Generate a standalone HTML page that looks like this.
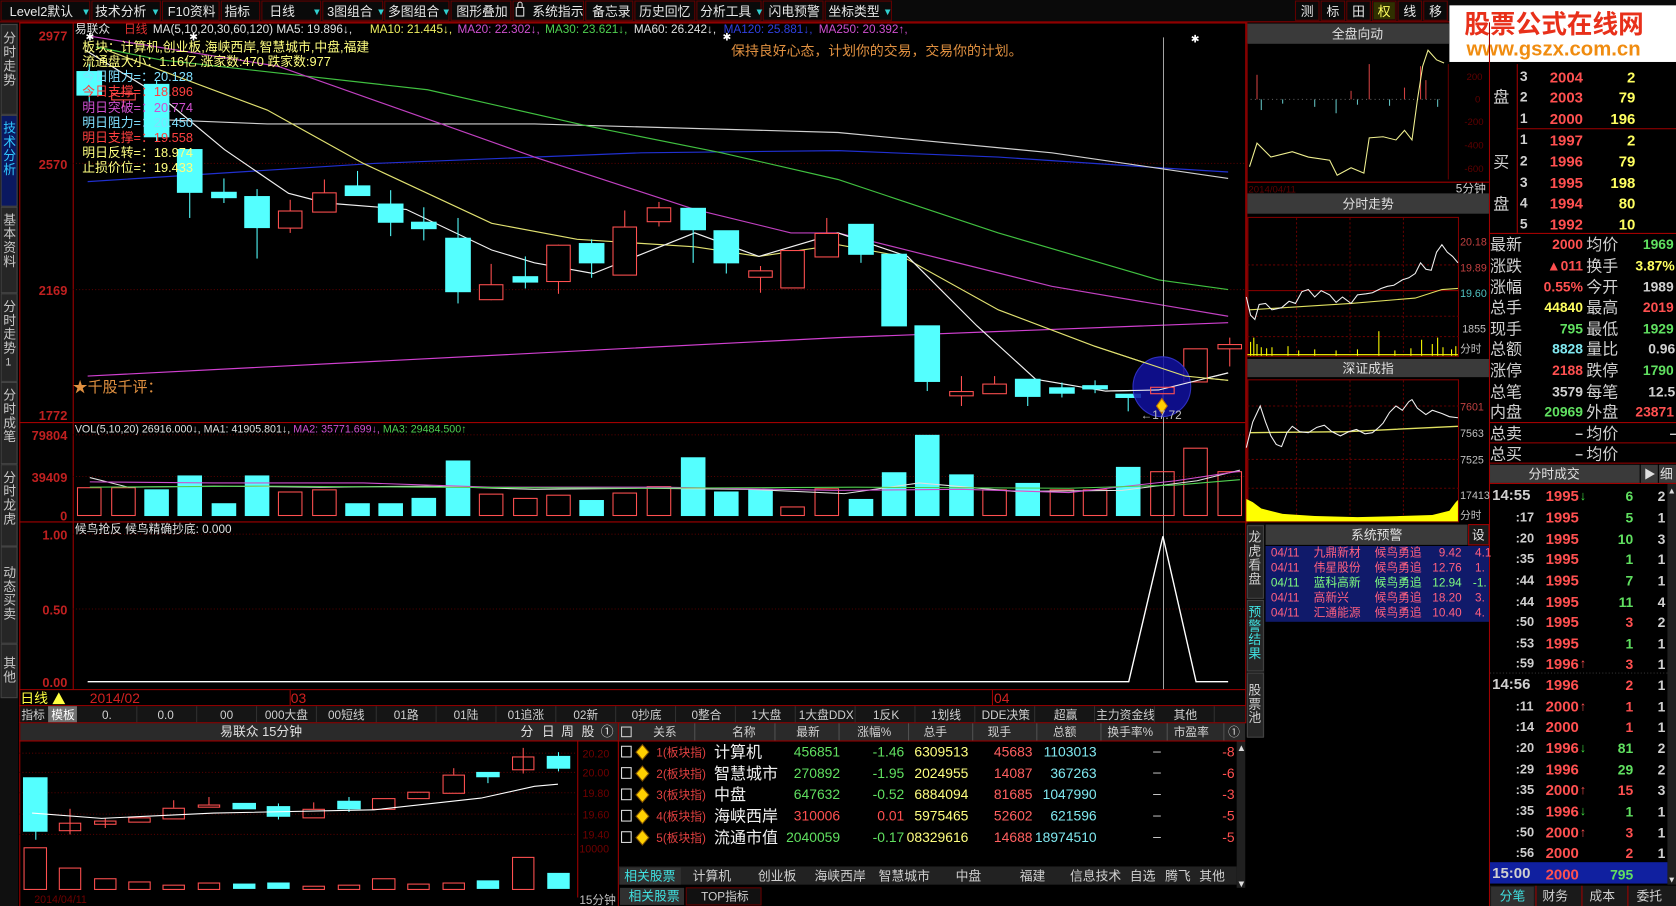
<!DOCTYPE html>
<html><head><meta charset="utf-8"><style>
html,body{margin:0;padding:0;background:#000;width:1676px;height:906px;overflow:hidden}
svg{display:block}
text{font-family:"Liberation Sans","Noto Sans CJK SC",sans-serif}
</style></head><body>
<svg width="1676" height="906" viewBox="0 0 1568 848" preserveAspectRatio="none" xmlns="http://www.w3.org/2000/svg">
<rect width="1568" height="848" fill="#000"/>

<!-- TOOLBAR -->
<g font-size="12" fill="#e8e8e8">
<rect x="0" y="0" width="1568" height="20" fill="#0a0a0a"/>
<line x1="0" y1="20.5" x2="1568" y2="20.5" stroke="#a00000"/>
<g stroke="#600000" fill="none">
<rect x="1" y="1" width="83" height="18"/><rect x="86" y="1" width="64" height="18"/><rect x="152" y="1" width="53" height="18"/>
<rect x="207" y="1" width="36" height="18"/><rect x="245" y="1" width="55" height="18"/><rect x="302" y="1" width="56" height="18"/>
<rect x="360" y="1" width="60" height="18"/><rect x="422" y="1" width="56" height="18"/><rect x="480" y="1" width="66" height="18"/>
<rect x="548" y="1" width="44" height="18"/><rect x="594" y="1" width="56" height="18"/><rect x="652" y="1" width="60" height="18"/>
<rect x="714" y="1" width="56" height="18"/><rect x="772" y="1" width="62" height="18"/>
<rect x="1212" y="1" width="22" height="18"/><rect x="1236" y="1" width="22" height="18"/><rect x="1260" y="1" width="22" height="18"/><rect x="1284" y="1" width="22" height="18"/><rect x="1308" y="1" width="22" height="18"/><rect x="1332" y="1" width="22" height="18"/>
</g>
<text x="9" y="15">Level2默认</text><text x="89" y="15">技术分析</text><text x="157" y="15">F10资料</text>
<text x="210" y="15">指标</text><text x="252" y="15">日线</text><text x="306" y="15">3图组合</text>
<text x="363" y="15">多图组合</text><text x="427" y="15">图形叠加</text><text x="498" y="15">系统指示</text>
<text x="554" y="15">备忘录</text><text x="598" y="15">历史回忆</text><text x="655" y="15">分析工具</text>
<text x="719" y="15">闪电预警</text><text x="775" y="15">坐标类型</text>
<g fill="#30d0d0" font-size="9"><text x="76" y="14">▼</text><text x="141" y="14">▼</text><text x="292" y="14">▼</text><text x="352" y="14">▼</text><text x="413" y="14">▼</text><text x="706" y="14">▼</text><text x="826" y="14">▼</text></g>
<rect x="483" y="7" width="7" height="8" fill="none" stroke="#ddd"/><path d="M484.5 7 V4 a2 2 0 0 1 4 0 V7" fill="none" stroke="#ddd"/>
<text x="1217" y="15">测</text><text x="1241" y="15">标</text><text x="1265" y="15">田</text>
<rect x="1285" y="2" width="20" height="16" fill="#303000"/><text x="1289" y="15" fill="#ffff60">权</text>
<text x="1313" y="15">线</text><text x="1337" y="15">移</text>
</g>

<!-- LOGO -->
<rect x="1356" y="5" width="212" height="53" fill="#fff"/>
<text x="1370" y="31" font-size="24" font-weight="bold" fill="#e8301a">股票公式在线网</text>
<text x="1372" y="52" font-size="19" font-weight="bold" fill="#f08c10">www.gszx.com.cn</text>

<!-- LEFT SIDEBAR -->
<g font-size="12" fill="#c8c8c8">
<rect x="0" y="21" width="17" height="827" fill="#101010"/>
<rect x="1" y="23" width="15" height="84" fill="#262626" stroke="#444"/>
<rect x="1" y="108" width="15" height="85" fill="#0a1860" stroke="#444"/>
<rect x="1" y="194" width="15" height="80" fill="#262626" stroke="#444"/>
<rect x="1" y="275" width="15" height="82" fill="#262626" stroke="#444"/>
<rect x="1" y="358" width="15" height="76" fill="#262626" stroke="#444"/>
<rect x="1" y="435" width="15" height="76" fill="#262626" stroke="#444"/>
<rect x="1" y="512" width="15" height="90" fill="#262626" stroke="#444"/>
<rect x="1" y="603" width="15" height="50" fill="#262626" stroke="#444"/>
<text x="3" y="40">分</text><text x="3" y="53">时</text><text x="3" y="66">走</text><text x="3" y="79">势</text>
<g fill="#30c8ff"><text x="3" y="124">技</text><text x="3" y="137">术</text><text x="3" y="150">分</text><text x="3" y="163">析</text></g>
<text x="3" y="210">基</text><text x="3" y="223">本</text><text x="3" y="236">资</text><text x="3" y="249">料</text>
<text x="3" y="291">分</text><text x="3" y="304">时</text><text x="3" y="317">走</text><text x="3" y="330">势</text><text x="5" y="342" font-size="10">1</text>
<text x="3" y="374">分</text><text x="3" y="387">时</text><text x="3" y="400">成</text><text x="3" y="413">笔</text>
<text x="3" y="451">分</text><text x="3" y="464">时</text><text x="3" y="477">龙</text><text x="3" y="490">虎</text>
<text x="3" y="540">动</text><text x="3" y="553">态</text><text x="3" y="566">买</text><text x="3" y="579">卖</text>
<text x="3" y="625">其</text><text x="3" y="638">他</text>
</g>

<!-- MAIN CHART FRAME -->
<g stroke="#a00000" fill="none">
<rect x="18.5" y="21.5" width="1147" height="655"/>
<line x1="68.5" y1="21" x2="68.5" y2="645"/>
<line x1="18" y1="395.5" x2="1165" y2="395.5"/>
<line x1="18" y1="488.5" x2="1165" y2="488.5"/>
<line x1="18" y1="645.5" x2="1165" y2="645.5"/>
<line x1="18" y1="660.5" x2="1165" y2="660.5"/>
<line x1="18" y1="676.5" x2="1165" y2="676.5"/>
</g>
<g stroke="#500000" stroke-dasharray="1 2">
<line x1="68" y1="153" x2="1165" y2="153"/><line x1="68" y1="271" x2="1165" y2="271"/>
<line x1="68" y1="407" x2="1165" y2="407"/><line x1="68" y1="446" x2="1165" y2="446"/>
<line x1="68" y1="500" x2="1165" y2="500"/><line x1="68" y1="570" x2="1165" y2="570"/>
</g>
<g font-size="12" fill="#c02020" font-weight="bold" text-anchor="end">
<text x="63" y="38">2977</text><text x="63" y="158">2570</text><text x="63" y="276">2169</text><text x="63" y="393">1772</text>
<text x="63" y="412">79804</text><text x="63" y="451">39409</text><text x="63" y="487">0</text>
<text x="63" y="505">1.00</text><text x="63" y="575">0.50</text><text x="63" y="643">0.00</text>
</g>

<!-- MA lines -->
<g fill="none" stroke-width="1.1">
<polyline stroke="#d040d0" points="82,352 784,316 1149,302"/>
<polyline stroke="#2030d0" points="82,170 350,153 600,143 784,141 934,147 1084,157 1149,161"/>
<polyline stroke="#d0d0d0" points="150,112 250,116 500,116 784,124 984,143 1149,167"/>
<polyline stroke="#40c040" points="90,44 150,56 400,84 550,118 675,143 784,168 934,218 1084,262 1149,271"/>
<polyline stroke="#c040c0" points="85,34 260,62 410,115 500,147 650,196 740,218 784,218 884,243 984,268 1149,296"/>
<polyline stroke="#e0e070" points="100,47 250,103 340,153 460,209 540,224 650,231 710,240 784,229 844,240 934,290 1024,324 1109,352 1149,356"/>
<polyline stroke="#f0f0f0" points="80,47 150,90 210,140 270,181 305,190 380,196 460,234 500,246 555,256 650,218 710,240 784,218 849,240 914,305 969,355 1034,366 1084,365 1149,349"/>
</g>

<!-- Candles -->
<g stroke-width="1">
<g stroke="#54ffff" fill="#54ffff">
<line x1="83.5" y1="60" x2="83.5" y2="95"/><rect x="72" y="67" width="23" height="22"/>
<line x1="146.5" y1="75" x2="146.5" y2="132"/><rect x="135" y="79" width="23" height="49"/>
<line x1="177.5" y1="140" x2="177.5" y2="204"/><rect x="166" y="140" width="23" height="40"/>
<line x1="209.5" y1="167" x2="209.5" y2="190"/><rect x="198" y="180" width="23" height="5"/>
<line x1="240.5" y1="177" x2="240.5" y2="242"/><rect x="229" y="184" width="23" height="29"/>
<line x1="334.5" y1="160" x2="334.5" y2="183"/><rect x="323" y="174" width="23" height="9"/>
<line x1="365.5" y1="178" x2="365.5" y2="221"/><rect x="354" y="191" width="23" height="17"/>
<line x1="396.5" y1="194" x2="396.5" y2="225"/><rect x="385" y="208" width="23" height="6"/>
<line x1="428.5" y1="204" x2="428.5" y2="284"/><rect x="417" y="223" width="23" height="50"/>
<line x1="491.5" y1="240" x2="491.5" y2="270"/><rect x="480" y="259" width="23" height="5"/>
<line x1="553.5" y1="224" x2="553.5" y2="260"/><rect x="542" y="228" width="23" height="18"/>
<line x1="648.5" y1="195" x2="648.5" y2="246"/><rect x="637" y="195" width="23" height="20"/>
<line x1="679.5" y1="216" x2="679.5" y2="256"/><rect x="668" y="216" width="23" height="30"/>
<line x1="805.5" y1="210" x2="805.5" y2="246"/><rect x="794" y="210" width="23" height="28"/>
<rect x="825" y="238" width="23" height="67"/>
<line x1="867.5" y1="305" x2="867.5" y2="366"/><rect x="856" y="305" width="23" height="52"/>
<line x1="961.5" y1="355" x2="961.5" y2="380"/><rect x="950" y="355" width="23" height="16"/>
<line x1="993.5" y1="358" x2="993.5" y2="372"/><rect x="982" y="363" width="23" height="5"/>
<line x1="1024.5" y1="356" x2="1024.5" y2="368"/><rect x="1013" y="361" width="23" height="3"/>
<line x1="1055.5" y1="372" x2="1055.5" y2="385"/><rect x="1044" y="369" width="23" height="3"/>
</g>
<g stroke="#ff5050" fill="#000">
<line x1="115.5" y1="80" x2="115.5" y2="100"/><rect x="104.5" y="87.5" width="22" height="6"/>
<line x1="271.5" y1="187" x2="271.5" y2="218"/><rect x="260.5" y="197.5" width="22" height="16"/>
<line x1="303.5" y1="168" x2="303.5" y2="198"/><rect x="292.5" y="180.5" width="22" height="18"/>
<line x1="459.5" y1="247" x2="459.5" y2="281"/><rect x="448.5" y="266.5" width="22" height="14"/>
<line x1="522.5" y1="229" x2="522.5" y2="275"/><rect x="511.5" y="229.5" width="22" height="34"/>
<line x1="584.5" y1="197" x2="584.5" y2="257"/><rect x="573.5" y="212.5" width="22" height="45"/>
<line x1="616.5" y1="189" x2="616.5" y2="212"/><rect x="605.5" y="194.5" width="22" height="13"/>
<line x1="711.5" y1="249" x2="711.5" y2="274"/><rect x="700.5" y="253.5" width="22" height="6"/>
<rect x="730.5" y="234.5" width="22" height="35"/>
<line x1="773.5" y1="204" x2="773.5" y2="240"/><rect x="762.5" y="218.5" width="22" height="22"/>
<line x1="899.5" y1="352" x2="899.5" y2="380"/><rect x="888.5" y="366.5" width="22" height="4"/>
<line x1="930.5" y1="352" x2="930.5" y2="368"/><rect x="919.5" y="359.5" width="22" height="9"/>
<line x1="1087.5" y1="362" x2="1087.5" y2="376"/><rect x="1076.5" y="362.5" width="22" height="6"/>
<rect x="1107.5" y="326.5" width="22" height="31"/>
<line x1="1150.5" y1="316" x2="1150.5" y2="343"/><rect x="1139.5" y="322.5" width="22" height="4"/>
</g>
</g>
<line x1="1088.5" y1="35" x2="1088.5" y2="645" stroke="#c0c0c0" stroke-width="0.8"/>
<ellipse cx="1087" cy="362" rx="27" ry="28" fill="#1010a0" fill-opacity="0.85" stroke="#3030c0"/>
<polyline fill="none" stroke="#f0f0f0" points="1034,366 1084,365 1149,349"/>
<polyline fill="none" stroke="#e0e070" points="1024,324 1109,352 1149,356"/>
<rect x="1076.5" y="362.5" width="22" height="6" fill="none" stroke="#ff5050"/>
<path d="M1087 373 l5 7 l-5 7 l-5 -7z" fill="#ffd000" stroke="#c07000"/>
<text x="1067" y="392" font-size="11" fill="#c0c0c0">←17.72</text>
<g fill="#fff" font-size="10"><text x="80" y="38">✱</text><text x="177" y="38">✱</text><text x="676" y="38">✱</text><text x="1114" y="40">✱</text></g>

<g font-size="11">
<text x="70" y="31" fill="#e0e0e0">易联众</text>
<text x="116" y="31" fill="#e03030">日线</text>
<text x="143" y="31" fill="#e0e0e0">MA(5,10,20,30,60,120) MA5: 19.896↓,</text>
<text x="346" y="31" fill="#f0f060">MA10: 21.445↓,</text>
<text x="428" y="31" fill="#d050d0">MA20: 22.302↓,</text>
<text x="510" y="31" fill="#50d050">MA30: 23.621↓,</text>
<text x="593" y="31" fill="#e0e0e0">MA60: 26.242↓,</text>
<text x="677" y="31" fill="#3040e0">MA120: 25.881↓,</text>
<text x="766" y="31" fill="#d050d0">MA250: 20.392↑,</text>
</g>
<g font-size="12">
<text x="77" y="48" fill="#ffff80">板块：计算机,创业板,海峡西岸,智慧城市,中盘,福建</text>
<text x="77" y="62" fill="#ffff80">流通盘大小：1.16亿  涨家数:470   跌家数:977</text>
<text x="77" y="76" fill="#80e0ff">今日阻力=：20.128</text>
<text x="77" y="90" fill="#ff4040">今日支撑=：18.896</text>
<text x="77" y="105" fill="#d050d0">明日突破=：20.774</text>
<text x="77" y="119" fill="#80e0ff">明日阻力=：20.450</text>
<text x="77" y="133" fill="#ff4040">明日支撑=：19.558</text>
<text x="77" y="147" fill="#ffff80">明日反转=：18.974</text>
<text x="77" y="161" fill="#ffff80">止损价位=：19.433</text>
</g>
<text x="684" y="52" font-size="13" fill="#e09040">保持良好心态，计划你的交易，交易你的计划。</text>
<text x="68" y="367" font-size="14" fill="#e09040">★千股千评：</text>

<!-- VOLUME -->
<text x="70" y="405" font-size="10" fill="#e0e0e0">VOL(5,10,20)  26916.000↓, <tspan fill="#e0e0e0">MA1: 41905.801↓,</tspan> <tspan fill="#d050d0">MA2: 35771.699↓,</tspan> <tspan fill="#50d050">MA3: 29484.500↑</tspan></text>
<g fill="#54ffff">
<rect x="135" y="458" width="23" height="25"/><rect x="166" y="445" width="23" height="38"/><rect x="198" y="471" width="23" height="12"/>
<rect x="229" y="445" width="23" height="38"/><rect x="323" y="471" width="23" height="12"/><rect x="354" y="471" width="23" height="12"/>
<rect x="385" y="466" width="23" height="17"/><rect x="417" y="431" width="23" height="52"/><rect x="542" y="468" width="23" height="15"/>
<rect x="637" y="428" width="23" height="55"/><rect x="668" y="460" width="23" height="23"/><rect x="700" y="458" width="23" height="25"/>
<rect x="794" y="467" width="23" height="16"/><rect x="825" y="442" width="23" height="41"/><rect x="856" y="407" width="23" height="76"/>
<rect x="888" y="444" width="23" height="39"/><rect x="950" y="452" width="23" height="31"/><rect x="1044" y="437" width="23" height="46"/>
</g>
<g fill="none" stroke="#ff5050">
<rect x="72.5" y="456.5" width="22" height="26"/><rect x="104.5" y="456.5" width="22" height="26"/><rect x="260.5" y="460.5" width="22" height="22"/>
<rect x="292.5" y="458.5" width="22" height="24"/><rect x="448.5" y="462.5" width="22" height="20"/><rect x="480.5" y="466.5" width="22" height="16"/>
<rect x="511.5" y="463.5" width="22" height="19"/><rect x="573.5" y="461.5" width="22" height="21"/><rect x="605.5" y="455.5" width="22" height="27"/>
<rect x="730.5" y="474.5" width="22" height="8"/><rect x="762.5" y="457.5" width="22" height="25"/><rect x="919.5" y="458.5" width="22" height="24"/>
<rect x="982.5" y="458.5" width="22" height="24"/><rect x="1013.5" y="458.5" width="22" height="24"/><rect x="1076.5" y="441.5" width="22" height="41"/>
<rect x="1107.5" y="419.5" width="22" height="63"/><rect x="1139.5" y="441.5" width="22" height="41"/>
</g>
<g fill="none" stroke-width="1">
<polyline stroke="#e0e0e0" points="84,447 120,456 200,455 300,456 400,455 500,458 600,457 700,458 790,462 860,452 950,460 1050,459 1120,450 1160,440"/>
<polyline stroke="#d050d0" points="84,451 200,452 340,452 460,456 620,456 780,459 900,458 1000,461 1100,450 1160,441"/>
<polyline stroke="#50d050" points="84,456 250,455 400,456 600,457 800,456 1000,457 1100,454 1160,449"/>
</g>

<!-- INDICATOR -->
<text x="70" y="499" font-size="11" fill="#e0e0e0">候鸟抢反  候鸟精确抄底: 0.000</text>
<polyline fill="none" stroke="#fff" stroke-width="1.3" points="82,638 1056,638 1088,502 1119,638 1149,638"/>

<!-- DATE AXIS -->
<text x="19" y="658" font-size="13" fill="#ffff40">日线</text><path d="M49 659 l6 -11 l6 11z" fill="#ffff40"/>
<text x="84" y="658" font-size="13" fill="#d02020">2014/02</text>
<text x="272" y="658" font-size="13" fill="#d02020">03</text>
<text x="930" y="658" font-size="13" fill="#d02020">04</text>
<line x1="271.5" y1="646" x2="271.5" y2="660" stroke="#a00000"/><line x1="928.5" y1="646" x2="928.5" y2="660" stroke="#a00000"/>

<!-- TAB ROW -->
<rect x="19" y="661" width="1146" height="15" fill="#151515"/>
<rect x="45" y="661" width="27" height="15" fill="#707070"/>
<g font-size="11" fill="#d0d0d0" text-anchor="middle">
<text x="31" y="673">指标</text><text x="59" y="673" fill="#fff">模板</text>
<text x="100" y="673">0.</text><text x="155" y="673">0.0</text><text x="212" y="673">00</text><text x="268" y="673">000大盘</text>
<text x="324" y="673">00短线</text><text x="380" y="673">01路</text><text x="436" y="673">01陆</text><text x="492" y="673">01追涨</text>
<text x="548" y="673">02新</text><text x="605" y="673">0抄底</text><text x="661" y="673">0整合</text><text x="717" y="673">1大盘</text>
<text x="773" y="673">1大盘DDX</text><text x="829" y="673">1反K</text><text x="885" y="673">1划线</text><text x="941" y="673">DDE决策</text>
<text x="997" y="673">超赢</text><text x="1053" y="673">主力资金线</text><text x="1109" y="673">其他</text>
</g>
<g stroke="#303030"><line x1="128" y1="661" x2="128" y2="676"/><line x1="184" y1="661" x2="184" y2="676"/><line x1="240" y1="661" x2="240" y2="676"/><line x1="296" y1="661" x2="296" y2="676"/><line x1="352" y1="661" x2="352" y2="676"/><line x1="408" y1="661" x2="408" y2="676"/><line x1="464" y1="661" x2="464" y2="676"/><line x1="520" y1="661" x2="520" y2="676"/><line x1="576" y1="661" x2="576" y2="676"/><line x1="632" y1="661" x2="632" y2="676"/><line x1="688" y1="661" x2="688" y2="676"/><line x1="744" y1="661" x2="744" y2="676"/><line x1="800" y1="661" x2="800" y2="676"/><line x1="856" y1="661" x2="856" y2="676"/><line x1="912" y1="661" x2="912" y2="676"/><line x1="968" y1="661" x2="968" y2="676"/><line x1="1024" y1="661" x2="1024" y2="676"/><line x1="1080" y1="661" x2="1080" y2="676"/><line x1="1136" y1="661" x2="1136" y2="676"/></g>

<!-- BOTTOM LEFT 15 MIN -->
<rect x="19" y="677" width="559" height="16" fill="#2a2a2a"/>
<text x="206" y="689" font-size="12" fill="#e0e0e0">易联众   15分钟</text>
<g font-size="12" fill="#e0e0e0"><text x="487" y="689">分</text><text x="507" y="689">日</text><text x="525" y="689">周</text><text x="544" y="689">股</text><text x="562" y="689">①</text></g>
<g stroke="#a00000" fill="none"><line x1="18" y1="693.5" x2="1165" y2="693.5"/><line x1="578.5" y1="677" x2="578.5" y2="848"/><line x1="540.5" y1="693" x2="540.5" y2="840"/><line x1="18.5" y1="677" x2="18.5" y2="848"/></g>
<g stroke="#500000" stroke-dasharray="1 2"><line x1="18" y1="705" x2="540" y2="705"/><line x1="18" y1="723" x2="540" y2="723"/><line x1="18" y1="742" x2="540" y2="742"/><line x1="18" y1="762" x2="540" y2="762"/><line x1="18" y1="781" x2="540" y2="781"/></g>
<g font-size="10" fill="#700000"><text x="545" y="709">20.20</text><text x="545" y="727">20.00</text><text x="545" y="746">19.80</text><text x="545" y="766">19.60</text><text x="545" y="785">19.40</text><text x="542" y="798">10000</text><text x="32" y="845">2014/04/11</text></g>
<text x="542" y="846" font-size="11" fill="#c0c0c0">15分钟</text>
<g fill="#54ffff" stroke="#54ffff">
<line x1="33.5" y1="728" x2="33.5" y2="786"/><rect x="22" y="728" width="22" height="50"/>
<rect x="218" y="752" width="21" height="5"/><line x1="260.5" y1="752" x2="260.5" y2="767"/><rect x="250" y="755" width="21" height="9"/>
<line x1="326.5" y1="746" x2="326.5" y2="760"/><rect x="316" y="750" width="21" height="7"/><line x1="456.5" y1="723" x2="456.5" y2="733"/><rect x="446" y="723" width="21" height="4"/>
<line x1="522.5" y1="704" x2="522.5" y2="722"/><rect x="512" y="708" width="21" height="11"/>
</g>
<g fill="none" stroke="#ff5050">
<line x1="65.5" y1="757" x2="65.5" y2="781"/><rect x="55.5" y="770.5" width="20" height="7"/>
<line x1="98.5" y1="766" x2="98.5" y2="775"/><rect x="88.5" y="768.5" width="20" height="3"/>
<rect x="120.5" y="765.5" width="20" height="4"/>
<line x1="162.5" y1="749" x2="162.5" y2="756"/><rect x="152.5" y="756.5" width="20" height="10"/>
<line x1="195.5" y1="746" x2="195.5" y2="753"/><rect x="185.5" y="753.5" width="20" height="2"/>
<rect x="283.5" y="757.5" width="20" height="8"/><line x1="293.5" y1="751" x2="293.5" y2="757"/>
<rect x="348.5" y="747.5" width="21" height="10"/><rect x="381.5" y="741.5" width="20" height="6"/>
<line x1="424.5" y1="719" x2="424.5" y2="725"/><rect x="414.5" y="725.5" width="20" height="17"/>
<line x1="489.5" y1="700" x2="489.5" y2="724"/><rect x="479.5" y="708.5" width="20" height="12"/>
</g>
<polyline fill="none" stroke="#fff" points="30,761 95,766 200,761 350,758 450,747 500,736 522,734"/>
<g fill="#54ffff"><rect x="218" y="827" width="21" height="5"/><rect x="250" y="826" width="21" height="6"/><rect x="446" y="824" width="21" height="8"/><rect x="512" y="817" width="21" height="15"/></g>
<g fill="none" stroke="#ff5050"><rect x="22.5" y="793.5" width="21" height="39"/><rect x="55.5" y="812.5" width="20" height="20"/><rect x="88.5" y="822.5" width="20" height="10"/><rect x="120.5" y="825.5" width="20" height="7"/><rect x="152.5" y="828.5" width="20" height="4"/><rect x="185.5" y="826.5" width="20" height="6"/><rect x="283.5" y="829.5" width="20" height="3"/><rect x="316.5" y="828.5" width="20" height="4"/><rect x="348.5" y="822.5" width="21" height="10"/><rect x="381.5" y="827.5" width="20" height="5"/><rect x="414.5" y="826.5" width="20" height="6"/><rect x="479.5" y="802.5" width="20" height="30"/></g>

<!-- RELATED STOCKS TABLE -->
<rect x="579" y="677" width="586" height="16" fill="#2a2a2a"/>
<g font-size="11" fill="#d0d0d0">
<rect x="581.5" y="680.5" width="9" height="9" fill="none" stroke="#ccc"/>
<text x="611" y="689">关系</text><text x="685" y="689">名称</text><text x="745" y="689">最新</text><text x="802" y="689">涨幅%</text>
<text x="864" y="689">总手</text><text x="924" y="689">现手</text><text x="985" y="689">总额</text><text x="1036" y="689">换手率%</text>
<text x="1098" y="689">市盈率</text><text x="1149" y="689">①</text>
</g>
<g stroke="#505050"><line x1="650" y1="677" x2="650" y2="693"/><line x1="725" y1="677" x2="725" y2="693"/><line x1="785" y1="677" x2="785" y2="693"/><line x1="850" y1="677" x2="850" y2="693"/><line x1="910" y1="677" x2="910" y2="693"/><line x1="970" y1="677" x2="970" y2="693"/><line x1="1030" y1="677" x2="1030" y2="693"/><line x1="1092" y1="677" x2="1092" y2="693"/><line x1="1145" y1="677" x2="1145" y2="693"/></g>
<g>
<g fill="none" stroke="#ddd"><rect x="581.5" y="698.5" width="9" height="10"/><rect x="581.5" y="718.5" width="9" height="10"/><rect x="581.5" y="738.5" width="9" height="10"/><rect x="581.5" y="758.5" width="9" height="10"/><rect x="581.5" y="778.5" width="9" height="10"/></g>
<g fill="#ffd000" stroke="#805000"><path d="M601 697 l6 7 l-6 7 l-6 -7z"/><path d="M601 717 l6 7 l-6 7 l-6 -7z"/><path d="M601 737 l6 7 l-6 7 l-6 -7z"/><path d="M601 757 l6 7 l-6 7 l-6 -7z"/><path d="M601 777 l6 7 l-6 7 l-6 -7z"/></g>
<g font-size="11" fill="#e04040"><text x="614" y="708">1(板块指)</text><text x="614" y="728">2(板块指)</text><text x="614" y="748">3(板块指)</text><text x="614" y="768">4(板块指)</text><text x="614" y="788">5(板块指)</text></g>
<g font-size="15" fill="#f0f0f0"><text x="668" y="709">计算机</text><text x="668" y="729">智慧城市</text><text x="668" y="749">中盘</text><text x="668" y="769">海峡西岸</text><text x="668" y="789">流通市值</text></g>
<g font-size="13" text-anchor="end">
<g fill="#60e060"><text x="786" y="708">456851</text><text x="786" y="728">270892</text><text x="786" y="748">647632</text><text x="786" y="788">2040059</text></g>
<text x="786" y="768" fill="#ff5050">310006</text>
<g fill="#60e060"><text x="846" y="708">-1.46</text><text x="846" y="728">-1.95</text><text x="846" y="748">-0.52</text><text x="846" y="788">-0.17</text></g>
<text x="846" y="768" fill="#ff5050">0.01</text>
<g fill="#ffff80"><text x="906" y="708">6309513</text><text x="906" y="728">2024955</text><text x="906" y="748">6884094</text><text x="906" y="768">5975465</text><text x="906" y="788">08329616</text></g>
<g fill="#ff6060"><text x="966" y="708">45683</text><text x="966" y="728">14087</text><text x="966" y="748">81685</text><text x="966" y="768">52602</text><text x="966" y="788">14688</text></g>
<g fill="#80e8f0"><text x="1026" y="708">1103013</text><text x="1026" y="728">367263</text><text x="1026" y="748">1047990</text><text x="1026" y="768">621596</text><text x="1026" y="788">18974510</text></g>
<g fill="#d0d0d0"><text x="1086" y="707">–</text><text x="1086" y="727">–</text><text x="1086" y="747">–</text><text x="1086" y="767">–</text><text x="1086" y="787">–</text></g>
<g fill="#ff5050"><text x="1155" y="708">-8</text><text x="1155" y="728">-6</text><text x="1155" y="748">-3</text><text x="1155" y="768">-5</text><text x="1155" y="788">-5</text></g>
</g>
</g>
<rect x="1157" y="694" width="8" height="137" fill="#202020"/>
<text x="1157" y="703" font-size="9" fill="#ddd">▲</text><text x="1157" y="830" font-size="9" fill="#ddd">▼</text>
<rect x="579" y="811" width="578" height="17" fill="#222"/>
<rect x="580" y="812" width="57" height="16" fill="#303030"/>
<g font-size="12" fill="#d0d0d0" text-anchor="middle">
<text x="608" y="824" fill="#40e0e0">相关股票</text><text x="666" y="824">计算机</text><text x="727" y="824">创业板</text><text x="786" y="824">海峡西岸</text><text x="846" y="824">智慧城市</text><text x="906" y="824">中盘</text><text x="966" y="824">福建</text><text x="1025" y="824">信息技术</text><text x="1069" y="824">自选</text><text x="1102" y="824">腾飞</text><text x="1134" y="824">其他</text>
</g>
<rect x="580" y="831" width="60" height="16" fill="#303030"/><rect x="642" y="831" width="70" height="16" fill="#111" stroke="#600"/>
<text x="588" y="843" font-size="12" fill="#40e0e0">相关股票</text><text x="656" y="843" font-size="11" fill="#d0d0d0">TOP指标</text>

<!-- RIGHT MIDDLE PANELS -->
<g stroke="#a00000" fill="none"><line x1="1166.5" y1="21" x2="1166.5" y2="490"/><line x1="1393.5" y1="21" x2="1393.5" y2="848"/></g>
<rect x="1167" y="22" width="189" height="19" fill="#3a3a3a"/>
<text x="1246" y="36" font-size="12" fill="#e0e0e0">全盘向动</text>
<g stroke="#600000"><line x1="1167" y1="41" x2="1167" y2="170"/><line x1="1355" y1="60" x2="1355" y2="168"/></g>
<g font-size="9" fill="#600000"><text x="1372" y="75">200</text><text x="1380" y="96">0</text><text x="1370" y="117">-200</text><text x="1370" y="139">-400</text><text x="1370" y="161">-600</text><text x="1168" y="180">2014/04/11</text></g>
<text x="1362" y="180" font-size="11" fill="#d0d0d0">5分钟</text>
<line x1="1167" y1="170.5" x2="1393" y2="170.5" stroke="#a00000"/>
<g stroke="#d04040"><line x1="1176" y1="70" x2="1176" y2="93"/><line x1="1281" y1="60" x2="1281" y2="93"/><line x1="1314" y1="82" x2="1314" y2="93"/><line x1="1329" y1="62" x2="1329" y2="93"/><line x1="1334" y1="75" x2="1334" y2="93"/><line x1="1264" y1="85" x2="1264" y2="93"/></g>
<g stroke="#60c0c0"><line x1="1180" y1="93" x2="1180" y2="103"/><line x1="1200" y1="93" x2="1200" y2="97"/><line x1="1230" y1="93" x2="1230" y2="100"/><line x1="1250" y1="93" x2="1250" y2="106"/><line x1="1270" y1="93" x2="1270" y2="98"/><line x1="1300" y1="93" x2="1300" y2="99"/><line x1="1345" y1="93" x2="1345" y2="100"/></g>
<line x1="1170" y1="93" x2="1350" y2="93" stroke="#606060" stroke-dasharray="1 3"/>
<polyline fill="none" stroke="#f0f090" points="1169,156 1176,134 1189,147 1209,142 1224,147 1244,150 1251,164 1264,157 1276,162 1281,129 1294,128 1306,131 1314,122 1321,131 1326,94 1331,62 1336,47 1344,56 1351,59"/>

<rect x="1167" y="181" width="226" height="19" fill="#3a3a3a"/>
<text x="1256" y="195" font-size="12" fill="#e0e0e0">分时走势</text>
<g stroke="#800000" fill="none"><rect x="1167.5" y="203.5" width="197" height="130"/></g>
<g stroke="#600000" stroke-dasharray="2 2"><line x1="1213" y1="204" x2="1213" y2="333"/><line x1="1263" y1="204" x2="1263" y2="333"/><line x1="1313" y1="204" x2="1313" y2="333"/><line x1="1167" y1="248" x2="1365" y2="248"/><line x1="1167" y1="296" x2="1365" y2="296"/><line x1="1167" y1="315" x2="1365" y2="315"/></g>
<line x1="1167" y1="272" x2="1365" y2="272" stroke="#900000"/>
<g font-size="10" fill="#c04040"><text x="1366" y="230">20.18</text><text x="1366" y="254">19.89</text></g>
<g font-size="10" fill="#50c0c0"><text x="1366" y="278">19.60</text></g>
<g font-size="10" fill="#c0c0c0"><text x="1368" y="311">1855</text><text x="1366" y="330">分时</text></g>
<polyline fill="none" stroke="#e0e060" points="1169,290 1264,284 1324,279 1349,271 1364,270"/>
<polyline fill="none" stroke="#f0f0f0" points="1166,278 1170,295 1174,299 1178,285 1184,284 1190,290 1199,288 1206,282 1212,284 1218,273 1224,271 1230,278 1236,272 1244,276 1250,283 1256,278 1264,284 1270,276 1278,275 1284,274 1292,270 1298,268 1304,267 1312,262 1318,260 1324,256 1329,246 1334,252 1339,253 1344,236 1349,229 1354,236 1359,240 1364,246"/>
<g stroke="#ffff00"><line x1="1170" y1="320" x2="1170" y2="333"/><line x1="1173" y1="316" x2="1173" y2="333"/><line x1="1176" y1="322" x2="1176" y2="333"/><line x1="1180" y1="325" x2="1180" y2="333"/><line x1="1185" y1="326" x2="1185" y2="333"/><line x1="1190" y1="325" x2="1190" y2="333"/><line x1="1205" y1="324" x2="1205" y2="333"/><line x1="1215" y1="328" x2="1215" y2="333"/><line x1="1230" y1="327" x2="1230" y2="333"/><line x1="1250" y1="328" x2="1250" y2="333"/><line x1="1270" y1="327" x2="1270" y2="333"/><line x1="1290" y1="310" x2="1290" y2="333"/><line x1="1305" y1="328" x2="1305" y2="333"/><line x1="1320" y1="326" x2="1320" y2="333"/><line x1="1330" y1="318" x2="1330" y2="333"/><line x1="1340" y1="322" x2="1340" y2="333"/><line x1="1345" y1="316" x2="1345" y2="333"/><line x1="1350" y1="325" x2="1350" y2="333"/><line x1="1358" y1="327" x2="1358" y2="333"/><line x1="1362" y1="324" x2="1362" y2="333"/></g>
<line x1="1167" y1="332" x2="1364" y2="332" stroke="#ffff00"/>

<rect x="1167" y="336" width="226" height="17" fill="#3a3a3a"/>
<text x="1256" y="349" font-size="12" fill="#e0e0e0">深证成指</text>
<g stroke="#800000" fill="none"><rect x="1167.5" y="355.5" width="197" height="133"/></g>
<g stroke="#600000" stroke-dasharray="2 2"><line x1="1213" y1="356" x2="1213" y2="488"/><line x1="1263" y1="356" x2="1263" y2="488"/><line x1="1313" y1="356" x2="1313" y2="488"/><line x1="1167" y1="380" x2="1365" y2="380"/><line x1="1167" y1="430" x2="1365" y2="430"/><line x1="1167" y1="457" x2="1365" y2="457"/></g>
<g font-size="10" fill="#c04040"><text x="1366" y="384">7601</text></g>
<g font-size="10" fill="#c0c0c0"><text x="1366" y="409">7563</text><text x="1366" y="434">7525</text><text x="1366" y="467">17413</text><text x="1366" y="486">分时</text></g>
<polyline fill="none" stroke="#e0e060" stroke-width="1.3" points="1169,405 1260,404 1364,399"/>
<polyline fill="none" stroke="#f0f0f0" points="1166,419 1172,395 1179,380 1184,395 1189,408 1194,416 1199,418 1204,405 1209,399 1216,404 1224,405 1232,400 1239,398 1246,404 1254,408 1262,404 1269,402 1277,406 1284,405 1290,400 1294,396 1300,386 1306,380 1312,384 1318,376 1321,374 1326,382 1334,388 1340,384 1349,387 1356,390 1364,391"/>
<path d="M1166 488 L1166 467 L1172 470 L1180 476 L1200 481 L1230 483 L1270 484 L1310 483 L1340 482 L1356 478 L1362 470 L1364 468 L1364 488Z" fill="#ffff00"/>

<rect x="1166" y="490" width="17" height="200" fill="#101010"/>
<rect x="1167" y="492" width="15" height="68" fill="#262626" stroke="#444"/>
<rect x="1167" y="562" width="15" height="66" fill="#262626" stroke="#444"/>
<rect x="1167" y="630" width="15" height="60" fill="#262626" stroke="#444"/>
<g font-size="12" fill="#d0d0d0"><text x="1168" y="507">龙</text><text x="1168" y="520">虎</text><text x="1168" y="533">看</text><text x="1168" y="546">盘</text>
<g fill="#40e0e0"><text x="1168" y="577">预</text><text x="1168" y="590">警</text><text x="1168" y="603">结</text><text x="1168" y="616">果</text></g>
<text x="1168" y="650">股</text><text x="1168" y="663">票</text><text x="1168" y="676">池</text></g>

<rect x="1184" y="491" width="189" height="19" fill="#3a3a3a"/>
<text x="1264" y="505" font-size="12" fill="#e0e0e0">系统预警</text>
<rect x="1374" y="491" width="19" height="19" fill="#1a1a1a" stroke="#a00000"/><text x="1377" y="505" font-size="12" fill="#e0e0e0">设</text>
<rect x="1184" y="511" width="209" height="71" fill="#101a6a"/>
<g font-size="11">
<g fill="#ff6080"><text x="1189" y="521">04/11</text><text x="1229" y="521">九鼎新材</text><text x="1286" y="521">候鸟勇追</text><text x="1346" y="521">9.42</text><text x="1380" y="521">4.1</text>
<text x="1189" y="535">04/11</text><text x="1229" y="535">伟星股份</text><text x="1286" y="535">候鸟勇追</text><text x="1340" y="535">12.76</text><text x="1380" y="535">1.</text></g>
<g fill="#80ff80"><text x="1189" y="549">04/11</text><text x="1229" y="549">蓝科高新</text><text x="1286" y="549">候鸟勇追</text><text x="1340" y="549">12.94</text><text x="1378" y="549">-1.</text></g>
<g fill="#ff6080"><text x="1189" y="563">04/11</text><text x="1229" y="563">高新兴</text><text x="1286" y="563">候鸟勇追</text><text x="1340" y="563">18.20</text><text x="1380" y="563">3.</text>
<text x="1189" y="577">04/11</text><text x="1229" y="577">汇通能源</text><text x="1286" y="577">候鸟勇追</text><text x="1340" y="577">10.40</text><text x="1380" y="577">4.</text></g>
</g>

<!-- RIGHT COLUMN ORDER BOOK -->
<g stroke="#a00000"><line x1="1419.5" y1="60" x2="1419.5" y2="218"/><line x1="1419" y1="120.5" x2="1568" y2="120.5"/><line x1="1394" y1="218.5" x2="1568" y2="218.5"/><line x1="1394" y1="395.5" x2="1568" y2="395.5"/><line x1="1394" y1="414.5" x2="1568" y2="414.5"/><line x1="1394" y1="433.5" x2="1568" y2="433.5"/></g>
<g font-size="15" fill="#d0d0d0"><text x="1397" y="96">盘</text><text x="1397" y="157">买</text><text x="1397" y="196">盘</text></g>
<g font-size="13" fill="#d0d0d0" font-weight="bold"><text x="1422" y="76">3</text><text x="1422" y="95">2</text><text x="1422" y="115">1</text><text x="1422" y="135">1</text><text x="1422" y="155">2</text><text x="1422" y="175">3</text><text x="1422" y="194">4</text><text x="1422" y="214">5</text></g>
<g font-size="14" fill="#ff5050" text-anchor="end" font-weight="bold"><text x="1481" y="77">2004</text><text x="1481" y="96">2003</text><text x="1481" y="116">2000</text><text x="1481" y="136">1997</text><text x="1481" y="156">1996</text><text x="1481" y="176">1995</text><text x="1481" y="195">1994</text><text x="1481" y="215">1992</text></g>
<g font-size="14" fill="#ffff60" text-anchor="end" font-weight="bold"><text x="1530" y="77">2</text><text x="1530" y="96">79</text><text x="1530" y="116">196</text><text x="1530" y="136">2</text><text x="1530" y="156">79</text><text x="1530" y="176">198</text><text x="1530" y="195">80</text><text x="1530" y="215">10</text></g>

<g font-size="15" fill="#d0d0d0">
<text x="1394" y="234">最新</text><text x="1394" y="254">涨跌</text><text x="1394" y="274">涨幅</text><text x="1394" y="293">总手</text><text x="1394" y="313">现手</text><text x="1394" y="332">总额</text><text x="1394" y="352">涨停</text><text x="1394" y="372">总笔</text><text x="1394" y="391">内盘</text><text x="1394" y="411">总卖</text><text x="1394" y="430">总买</text>
<text x="1484" y="234">均价</text><text x="1484" y="254">换手</text><text x="1484" y="274">今开</text><text x="1484" y="293">最高</text><text x="1484" y="313">最低</text><text x="1484" y="332">量比</text><text x="1484" y="352">跌停</text><text x="1484" y="372">每笔</text><text x="1484" y="391">外盘</text><text x="1484" y="411">均价</text><text x="1484" y="430">均价</text>
</g>
<g font-size="13" font-weight="bold" text-anchor="end">
<text x="1481" y="233" fill="#ff5050">2000</text><text x="1481" y="253" fill="#ff5050">▲011</text><text x="1481" y="273" fill="#ff5050">0.55%</text><text x="1481" y="292" fill="#ffff60">44840</text><text x="1481" y="312" fill="#60e060">795</text><text x="1481" y="331" fill="#80e8f0">8828</text><text x="1481" y="351" fill="#ff5050">2188</text><text x="1481" y="371" fill="#d0d0d0">3579</text><text x="1481" y="390" fill="#60e060">20969</text><text x="1481" y="410" fill="#d0d0d0">–</text><text x="1481" y="429" fill="#d0d0d0">–</text>
</g>
<g font-size="13" font-weight="bold">
<text x="1537" y="233" fill="#60e060">1969</text><text x="1530" y="253" fill="#ffff60">3.87%</text><text x="1537" y="273" fill="#d0d0d0">1989</text><text x="1537" y="292" fill="#ff5050">2019</text><text x="1537" y="312" fill="#60e060">1929</text><text x="1542" y="331" fill="#d0d0d0">0.96</text><text x="1537" y="351" fill="#60e060">1790</text><text x="1542" y="371" fill="#d0d0d0">12.5</text><text x="1530" y="390" fill="#ff5050">23871</text><text x="1562" y="410" fill="#d0d0d0">–</text>
</g>

<!-- 分时成交 -->
<rect x="1394" y="435" width="140" height="17" fill="#3a3a3a"/>
<rect x="1535" y="435" width="16" height="17" fill="#3a3a3a"/><rect x="1552" y="435" width="16" height="17" fill="#3a3a3a"/>
<text x="1430" y="448" font-size="12" fill="#e0e0e0">分时成交</text><text x="1538" y="448" font-size="11" fill="#e0e0e0">▶</text><text x="1553" y="448" font-size="12" fill="#e0e0e0">细</text>
<line x1="1394" y1="452.5" x2="1568" y2="452.5" stroke="#a00000"/>
<line x1="1394" y1="630" x2="1560" y2="630" stroke="#303030" stroke-dasharray="1 2"/>
<rect x="1394" y="807" width="166" height="20" fill="#1020a0"/>
<g font-size="13" fill="#d0d0d0" font-weight="bold">
<text x="1396" y="468" font-size="14">14:55</text><text x="1418" y="488" font-size="12">:17</text><text x="1418" y="508" font-size="12">:20</text><text x="1418" y="527" font-size="12">:35</text><text x="1418" y="547" font-size="12">:44</text><text x="1418" y="567" font-size="12">:44</text><text x="1418" y="586" font-size="12">:50</text><text x="1418" y="606" font-size="12">:53</text><text x="1418" y="625" font-size="12">:59</text>
<text x="1396" y="645" font-size="14">14:56</text><text x="1418" y="665" font-size="12">:11</text><text x="1418" y="684" font-size="12">:14</text><text x="1418" y="704" font-size="12">:20</text><text x="1418" y="724" font-size="12">:29</text><text x="1418" y="743" font-size="12">:35</text><text x="1418" y="763" font-size="12">:35</text><text x="1418" y="783" font-size="12">:50</text><text x="1418" y="802" font-size="12">:56</text>
<text x="1396" y="822" font-size="14">15:00</text>
</g>
<g font-size="14" fill="#ff5050" font-weight="bold">
<text x="1446" y="469">1995</text><text x="1446" y="489">1995</text><text x="1446" y="509">1995</text><text x="1446" y="528">1995</text><text x="1446" y="548">1995</text><text x="1446" y="568">1995</text><text x="1446" y="587">1995</text><text x="1446" y="607">1995</text><text x="1446" y="626">1996</text>
<text x="1446" y="646">1996</text><text x="1446" y="666">2000</text><text x="1446" y="685">2000</text><text x="1446" y="705">1996</text><text x="1446" y="725">1996</text><text x="1446" y="744">2000</text><text x="1446" y="764">1996</text><text x="1446" y="784">2000</text><text x="1446" y="803">2000</text><text x="1446" y="823">2000</text>
</g>
<g font-size="12" font-weight="bold"><text x="1478" y="468" fill="#40e040">↓</text><text x="1478" y="625" fill="#ff5050">↑</text><text x="1478" y="665" fill="#ff5050">↑</text><text x="1478" y="704" fill="#40e040">↓</text><text x="1478" y="743" fill="#ff5050">↑</text><text x="1478" y="763" fill="#40e040">↓</text><text x="1478" y="783" fill="#ff5050">↑</text></g>
<g font-size="13" font-weight="bold" text-anchor="end">
<g fill="#60e060"><text x="1528" y="469">6</text><text x="1528" y="489">5</text><text x="1528" y="509">10</text><text x="1528" y="528">1</text><text x="1528" y="548">7</text><text x="1528" y="568">11</text><text x="1528" y="607">1</text><text x="1528" y="705">81</text><text x="1528" y="725">29</text><text x="1528" y="764">1</text><text x="1528" y="823">795</text></g>
<g fill="#ff5050"><text x="1528" y="587">3</text><text x="1528" y="626">3</text><text x="1528" y="646">2</text><text x="1528" y="666">1</text><text x="1528" y="685">1</text><text x="1528" y="744">15</text><text x="1528" y="784">3</text><text x="1528" y="803">2</text></g>
<g fill="#d0d0d0"><text x="1558" y="469">2</text><text x="1558" y="489">1</text><text x="1558" y="509">3</text><text x="1558" y="528">1</text><text x="1558" y="548">1</text><text x="1558" y="568">4</text><text x="1558" y="587">2</text><text x="1558" y="607">1</text><text x="1558" y="626">1</text><text x="1558" y="646">1</text><text x="1558" y="666">1</text><text x="1558" y="685">1</text><text x="1558" y="705">2</text><text x="1558" y="725">2</text><text x="1558" y="744">3</text><text x="1558" y="764">1</text><text x="1558" y="784">1</text><text x="1558" y="803">1</text></g>
</g>
<rect x="1560" y="453" width="8" height="375" fill="#202020"/>
<text x="1560" y="462" font-size="8" fill="#ddd">▲</text><text x="1560" y="826" font-size="8" fill="#ddd">▼</text>
<rect x="1394" y="829" width="174" height="19" fill="#1a1a1a"/>
<rect x="1395" y="830" width="40" height="18" fill="#303030"/>
<g font-size="12" fill="#d0d0d0"><text x="1403" y="843" fill="#40e0e0">分笔</text><text x="1443" y="843">财务</text><text x="1487" y="843">成本</text><text x="1531" y="843">委托</text></g>
<g stroke="#a00000"><line x1="1437" y1="829" x2="1437" y2="848"/><line x1="1480" y1="829" x2="1480" y2="848"/><line x1="1523" y1="829" x2="1523" y2="848"/></g>
</svg>
</body></html>
